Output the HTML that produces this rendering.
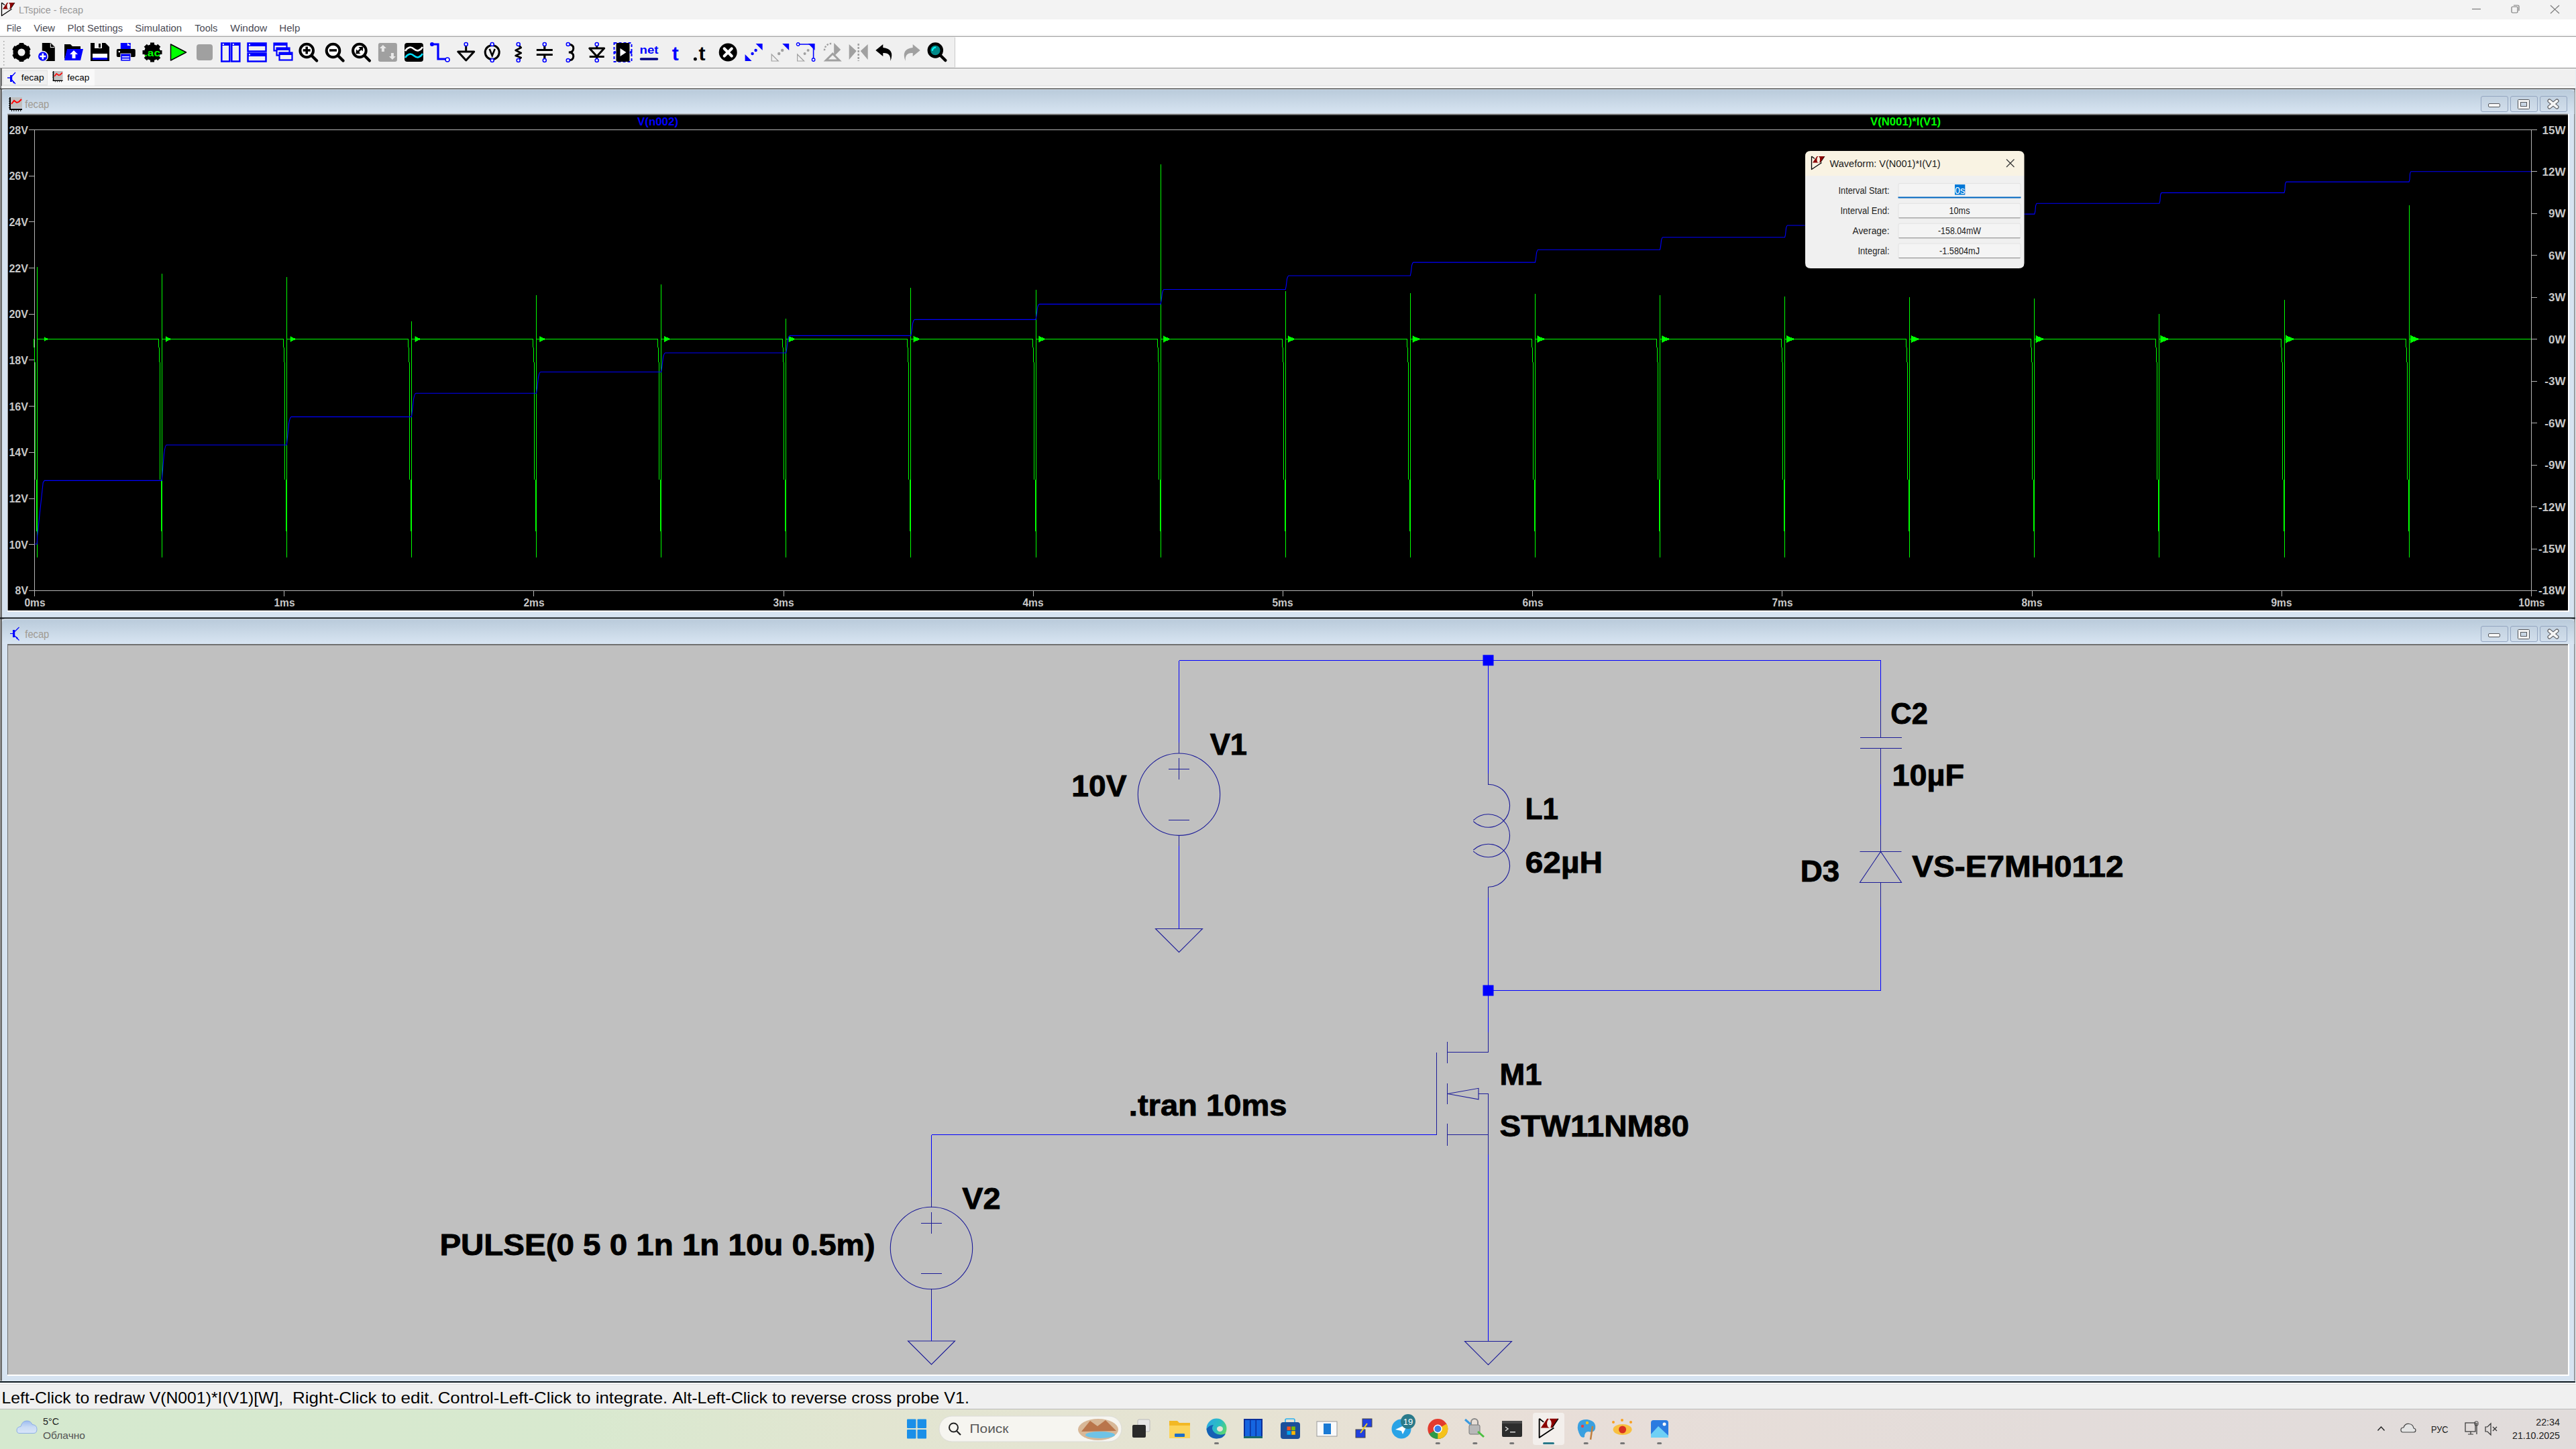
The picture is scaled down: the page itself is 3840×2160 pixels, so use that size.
<!DOCTYPE html><html><head><meta charset="utf-8"><style>
html,body{margin:0;padding:0;width:3840px;height:2160px;overflow:hidden;background:#f0f0f0}
svg{position:absolute;left:0;top:0;font-family:"Liberation Sans", sans-serif}
</style></head><body>
<svg width="3840" height="2160" viewBox="0 0 3840 2160">
<defs>
<linearGradient id="mdit" x1="0" y1="0" x2="0" y2="1"><stop offset="0" stop-color="#bacbdb"/><stop offset="1" stop-color="#d8e5f2"/></linearGradient>
<linearGradient id="tbar" x1="0" y1="0" x2="1" y2="0">
<stop offset="0" stop-color="#d5e9cf"/><stop offset="0.22" stop-color="#d8e9cf"/><stop offset="0.34" stop-color="#e2e5d1"/><stop offset="0.48" stop-color="#e6e3d3"/><stop offset="0.6" stop-color="#e8ded8"/><stop offset="0.8" stop-color="#e3dcda"/><stop offset="1" stop-color="#e1dcdb"/></linearGradient>
<linearGradient id="btng" x1="0" y1="0" x2="0" y2="1"><stop offset="0" stop-color="#c2d1e0"/><stop offset="1" stop-color="#d2dfec"/></linearGradient>
</defs>

<rect x="0" y="0" width="3840" height="29" fill="#f3f3f3"/>
<text x="28" y="20" font-size="15" font-weight="normal" fill="#999999" text-anchor="start" textLength="96" lengthAdjust="spacingAndGlyphs">LTspice - fecap</text>
<g stroke="#7a7a7a" stroke-width="1.2" fill="none"><line x1="3685" y1="13.5" x2="3698" y2="13.5"/><rect x="3744" y="10" width="9" height="9" rx="1.5"/><path d="M3747 8 h6.5 a1.5 1.5 0 0 1 1.5 1.5 v6.5"/><line x1="3802" y1="8" x2="3815" y2="20"/><line x1="3815" y1="8" x2="3802" y2="20"/></g>
<g transform="translate(0,0) scale(1)"><path d="M2.5 4 V23.5 L17.5 13.5 M2.5 4 L7 7.5" fill="none" stroke="#000" stroke-width="1.3" stroke-linejoin="round"/><path d="M4 13.5 L10.5 4 H22 L15.5 13.5 Z" fill="#8b0000"/><ellipse cx="12.7" cy="9" rx="2.3" ry="4.2" fill="#f3f3f3"/><rect x="12" y="3.5" width="1.2" height="2.5" fill="#f3f3f3"/><rect x="13" y="12" width="1.2" height="2" fill="#f3f3f3"/><path d="M22 4 L16 13" stroke="#000" stroke-width="0.9"/></g>
<rect x="0" y="29" width="3840" height="23" fill="#ffffff"/>
<rect x="0" y="52" width="3840" height="1" fill="#f0f0f0"/>
<rect x="0" y="54" width="3840" height="1" fill="#a0a0a0"/>
<text x="9.8" y="46.6" font-size="14.8" font-weight="normal" fill="#4b4b55" text-anchor="start" textLength="21.9" lengthAdjust="spacingAndGlyphs">File</text>
<text x="50.3" y="46.6" font-size="14.8" font-weight="normal" fill="#4b4b55" text-anchor="start" textLength="31.7" lengthAdjust="spacingAndGlyphs">View</text>
<text x="100.6" y="46.6" font-size="14.8" font-weight="normal" fill="#4b4b55" text-anchor="start" textLength="82.5" lengthAdjust="spacingAndGlyphs">Plot Settings</text>
<text x="201.2" y="46.6" font-size="14.8" font-weight="normal" fill="#4b4b55" text-anchor="start" textLength="70" lengthAdjust="spacingAndGlyphs">Simulation</text>
<text x="290.3" y="46.6" font-size="14.8" font-weight="normal" fill="#4b4b55" text-anchor="start" textLength="34" lengthAdjust="spacingAndGlyphs">Tools</text>
<text x="343.3" y="46.6" font-size="14.8" font-weight="normal" fill="#4b4b55" text-anchor="start" textLength="55" lengthAdjust="spacingAndGlyphs">Window</text>
<text x="416.3" y="46.6" font-size="14.8" font-weight="normal" fill="#4b4b55" text-anchor="start" textLength="31" lengthAdjust="spacingAndGlyphs">Help</text>
<rect x="0" y="55" width="3840" height="46" fill="#ffffff"/>
<rect x="0" y="55" width="1424" height="46" fill="#f0f0f0"/>
<rect x="1423" y="56" width="1" height="44" fill="#c8c8c8"/>
<rect x="0" y="101" width="3840" height="1" fill="#8c8c8c"/>
<rect x="5" y="61" width="1.5" height="1.5" fill="#a0a0a0"/>
<rect x="5" y="66" width="1.5" height="1.5" fill="#a0a0a0"/>
<rect x="5" y="71" width="1.5" height="1.5" fill="#a0a0a0"/>
<rect x="5" y="76" width="1.5" height="1.5" fill="#a0a0a0"/>
<rect x="5" y="81" width="1.5" height="1.5" fill="#a0a0a0"/>
<rect x="5" y="86" width="1.5" height="1.5" fill="#a0a0a0"/>
<rect x="5" y="91" width="1.5" height="1.5" fill="#a0a0a0"/>
<rect x="5" y="96" width="1.5" height="1.5" fill="#a0a0a0"/>
<rect x="0" y="102" width="3840" height="30" fill="#f0f0f0"/>
<rect x="0" y="102" width="2" height="30" fill="#707070"/>
<rect x="2" y="127" width="3836" height="1" fill="#e3e3e3"/>
<rect x="4.5" y="105.5" width="66" height="21" fill="#f0f0f0" stroke="#e4e4e4"/>
<rect x="71" y="103.5" width="70" height="24" fill="#f9f9f9"/>
<g transform="translate(11,108)"><path d="M12 0 L5.5 7 M0 8 H5 M5.5 10 L12 17" stroke="#0000ff" stroke-width="1.3" fill="none"/><rect x="4" y="4" width="3.2" height="10" fill="#0000ff"/><path d="M7 11 L11 15 L9 16.5 Z" fill="#0000ff"/></g>
<text x="31.8" y="120.3" font-size="13.5" font-weight="normal" fill="#000" text-anchor="start" textLength="33.8" lengthAdjust="spacingAndGlyphs">fecap</text>
<g transform="translate(78,106) scale(0.78)"><rect x="3" y="0" width="17" height="16" fill="#c0c0c0"/><rect x="1" y="0" width="2" height="19" fill="#000"/><rect x="1" y="17" width="19" height="2" fill="#000"/><rect x="0" y="3" width="2" height="1" fill="#000"/><rect x="0" y="7" width="2" height="1" fill="#000"/><rect x="0" y="11" width="2" height="1" fill="#000"/><rect x="5" y="19" width="1" height="2" fill="#000"/><rect x="9" y="19" width="1" height="2" fill="#000"/><rect x="13" y="19" width="1" height="2" fill="#000"/><rect x="17" y="19" width="1" height="2" fill="#000"/><path d="M4 10 L8 5 L12 8 L15 7 L19 3" stroke="#ff0000" stroke-width="2" fill="none"/></g>
<text x="100.2" y="119.6" font-size="13.5" font-weight="normal" fill="#000" text-anchor="start" textLength="33" lengthAdjust="spacingAndGlyphs">fecap</text>
<rect x="0" y="132" width="3840" height="1929" fill="#d6e3f1"/>
<rect x="0" y="102" width="3" height="1959" fill="#6b6b6b"/><rect x="0" y="102" width="1" height="1959" fill="#9a9a9a"/>
<rect x="3837.3" y="132" width="1.5" height="1929" fill="#7a7a7a"/>
<rect x="3838.8" y="102" width="1.2" height="1959" fill="#e8edf2"/>
<rect x="2" y="128" width="3836.8" height="4" fill="#f9f9f9"/>
<rect x="2" y="128.6" width="3836" height="0.6" fill="#e6e6e6"/>
<rect x="0" y="131.8" width="3838.8" height="1.3" fill="#333333"/>
<path d="M3 170 V138 Q3 133.1 8 133.1 H3832 Q3837.3 133.1 3837.3 138 V170 Z" fill="#dde8f2"/>
<path d="M3 170 V139 Q3 134.1 8 134.1 H3832 Q3837.3 134.1 3837.3 139 V170 Z" fill="url(#mdit)"/>
<rect x="3698.5" y="143.5" width="40" height="23" rx="2.5" fill="url(#btng)" stroke="#93a5c0"/><rect x="3742.5" y="143.5" width="40" height="23" rx="2.5" fill="url(#btng)" stroke="#93a5c0"/><rect x="3786.5" y="143.5" width="40" height="23" rx="2.5" fill="url(#btng)" stroke="#93a5c0"/><rect x="3709.5" y="154.5" width="17" height="5" rx="1.5" fill="#fafafa" stroke="#55575c" stroke-width="1"/><rect x="3753.5" y="148.5" width="17" height="14" rx="1" fill="#f4f4f4" stroke="#55575c" stroke-width="1"/><rect x="3757.5" y="152.5" width="9" height="6" fill="#c8d5e3" stroke="#55575c" stroke-width="1"/><path d="M3800.5 150.5 L3811.5 159.5 M3811.5 150.5 L3800.5 159.5" stroke="#55575c" stroke-width="6" stroke-linecap="round"/><path d="M3800.5 150.5 L3811.5 159.5 M3811.5 150.5 L3800.5 159.5" stroke="#f6f6f6" stroke-width="3.8" stroke-linecap="round"/>
<g transform="translate(13,145)"><rect x="3" y="0" width="17" height="16" fill="#c0c0c0"/><rect x="1" y="0" width="2" height="19" fill="#000"/><rect x="1" y="17" width="19" height="2" fill="#000"/><rect x="0" y="2.0" width="2" height="1" fill="#000"/><rect x="0" y="5.3" width="2" height="1" fill="#000"/><rect x="0" y="8.6" width="2" height="1" fill="#000"/><rect x="0" y="11.9" width="2" height="1" fill="#000"/><rect x="0" y="15.2" width="2" height="1" fill="#000"/><rect x="4.0" y="19" width="1" height="2" fill="#000"/><rect x="7.3" y="19" width="1" height="2" fill="#000"/><rect x="10.6" y="19" width="1" height="2" fill="#000"/><rect x="13.9" y="19" width="1" height="2" fill="#000"/><rect x="17.2" y="19" width="1" height="2" fill="#000"/><path d="M4 10 L8 5 L12 8 L15 7 L19 3" stroke="#ff0000" stroke-width="2" fill="none"/></g>
<text x="37.3" y="161" font-size="17" font-weight="normal" fill="#a09a92" text-anchor="start" textLength="36" lengthAdjust="spacingAndGlyphs">fecap</text>
<rect x="11" y="170" width="3819" height="742" fill="#ffffff"/>
<rect x="11" y="169.5" width="3817" height="740.5" fill="#a0a0a0"/>
<rect x="12" y="170.5" width="3816" height="1" fill="#5a5a5a"/>
<rect x="12" y="171.5" width="3816" height="738.5" fill="#000000"/>
<g stroke="#b4b4b4" stroke-width="1" fill="none" shape-rendering="crispEdges">
<path d="M43 193.5 H3782 M43 880.5 H3782 M51.5 193.5 V889 M3773.5 193.5 V889"/>
<path d="M43 193.5 H51"/>
<path d="M43 262.5 H51"/>
<path d="M43 330.5 H51"/>
<path d="M43 399.5 H51"/>
<path d="M43 468.5 H51"/>
<path d="M43 536.5 H51"/>
<path d="M43 605.5 H51"/>
<path d="M43 674.5 H51"/>
<path d="M43 743.5 H51"/>
<path d="M43 811.5 H51"/>
<path d="M43 880.5 H51"/>
<path d="M3774 193.5 H3782"/>
<path d="M3774 255.5 H3782"/>
<path d="M3774 318.5 H3782"/>
<path d="M3774 380.5 H3782"/>
<path d="M3774 443.5 H3782"/>
<path d="M3774 505.5 H3782"/>
<path d="M3774 568.5 H3782"/>
<path d="M3774 630.5 H3782"/>
<path d="M3774 693.5 H3782"/>
<path d="M3774 755.5 H3782"/>
<path d="M3774 818.5 H3782"/>
<path d="M3774 880.5 H3782"/>
<path d="M51.5 881 V889"/>
<path d="M423.5 881 V889"/>
<path d="M795.5 881 V889"/>
<path d="M1168.5 881 V889"/>
<path d="M1540.5 881 V889"/>
<path d="M1912.5 881 V889"/>
<path d="M2284.5 881 V889"/>
<path d="M2656.5 881 V889"/>
<path d="M3029.5 881 V889"/>
<path d="M3401.5 881 V889"/>
<path d="M3773.5 881 V889"/>
</g>
<text x="42" y="200" font-size="17" font-weight="bold" fill="#c8c8c8" text-anchor="end" textLength="28.6" lengthAdjust="spacingAndGlyphs">28V</text>
<text x="42" y="268" font-size="17" font-weight="bold" fill="#c8c8c8" text-anchor="end" textLength="28.6" lengthAdjust="spacingAndGlyphs">26V</text>
<text x="42" y="337" font-size="17" font-weight="bold" fill="#c8c8c8" text-anchor="end" textLength="28.6" lengthAdjust="spacingAndGlyphs">24V</text>
<text x="42" y="406" font-size="17" font-weight="bold" fill="#c8c8c8" text-anchor="end" textLength="28.6" lengthAdjust="spacingAndGlyphs">22V</text>
<text x="42" y="474" font-size="17" font-weight="bold" fill="#c8c8c8" text-anchor="end" textLength="28.6" lengthAdjust="spacingAndGlyphs">20V</text>
<text x="42" y="543" font-size="17" font-weight="bold" fill="#c8c8c8" text-anchor="end" textLength="28.6" lengthAdjust="spacingAndGlyphs">18V</text>
<text x="42" y="612" font-size="17" font-weight="bold" fill="#c8c8c8" text-anchor="end" textLength="28.6" lengthAdjust="spacingAndGlyphs">16V</text>
<text x="42" y="680" font-size="17" font-weight="bold" fill="#c8c8c8" text-anchor="end" textLength="28.6" lengthAdjust="spacingAndGlyphs">14V</text>
<text x="42" y="749" font-size="17" font-weight="bold" fill="#c8c8c8" text-anchor="end" textLength="28.6" lengthAdjust="spacingAndGlyphs">12V</text>
<text x="42" y="818" font-size="17" font-weight="bold" fill="#c8c8c8" text-anchor="end" textLength="28.6" lengthAdjust="spacingAndGlyphs">10V</text>
<text x="42" y="886" font-size="17" font-weight="bold" fill="#c8c8c8" text-anchor="end" textLength="19.4" lengthAdjust="spacingAndGlyphs">8V</text>
<text x="3824.5" y="200" font-size="17" font-weight="bold" fill="#c8c8c8" text-anchor="end">15W</text>
<text x="3824.5" y="262" font-size="17" font-weight="bold" fill="#c8c8c8" text-anchor="end">12W</text>
<text x="3824.5" y="324" font-size="17" font-weight="bold" fill="#c8c8c8" text-anchor="end">9W</text>
<text x="3824.5" y="387" font-size="17" font-weight="bold" fill="#c8c8c8" text-anchor="end">6W</text>
<text x="3824.5" y="449" font-size="17" font-weight="bold" fill="#c8c8c8" text-anchor="end">3W</text>
<text x="3824.5" y="512" font-size="17" font-weight="bold" fill="#c8c8c8" text-anchor="end">0W</text>
<text x="3824.5" y="574" font-size="17" font-weight="bold" fill="#c8c8c8" text-anchor="end">-3W</text>
<text x="3824.5" y="637" font-size="17" font-weight="bold" fill="#c8c8c8" text-anchor="end">-6W</text>
<text x="3824.5" y="699" font-size="17" font-weight="bold" fill="#c8c8c8" text-anchor="end">-9W</text>
<text x="3824.5" y="762" font-size="17" font-weight="bold" fill="#c8c8c8" text-anchor="end">-12W</text>
<text x="3824.5" y="824" font-size="17" font-weight="bold" fill="#c8c8c8" text-anchor="end">-15W</text>
<text x="3824.5" y="886" font-size="17" font-weight="bold" fill="#c8c8c8" text-anchor="end">-18W</text>
<text x="52" y="904" font-size="17" font-weight="bold" fill="#c8c8c8" text-anchor="middle" textLength="31" lengthAdjust="spacingAndGlyphs">0ms</text>
<text x="424" y="904" font-size="17" font-weight="bold" fill="#c8c8c8" text-anchor="middle" textLength="31" lengthAdjust="spacingAndGlyphs">1ms</text>
<text x="796" y="904" font-size="17" font-weight="bold" fill="#c8c8c8" text-anchor="middle" textLength="31" lengthAdjust="spacingAndGlyphs">2ms</text>
<text x="1168" y="904" font-size="17" font-weight="bold" fill="#c8c8c8" text-anchor="middle" textLength="31" lengthAdjust="spacingAndGlyphs">3ms</text>
<text x="1540" y="904" font-size="17" font-weight="bold" fill="#c8c8c8" text-anchor="middle" textLength="31" lengthAdjust="spacingAndGlyphs">4ms</text>
<text x="1912" y="904" font-size="17" font-weight="bold" fill="#c8c8c8" text-anchor="middle" textLength="31" lengthAdjust="spacingAndGlyphs">5ms</text>
<text x="2285" y="904" font-size="17" font-weight="bold" fill="#c8c8c8" text-anchor="middle" textLength="31" lengthAdjust="spacingAndGlyphs">6ms</text>
<text x="2657" y="904" font-size="17" font-weight="bold" fill="#c8c8c8" text-anchor="middle" textLength="31" lengthAdjust="spacingAndGlyphs">7ms</text>
<text x="3029" y="904" font-size="17" font-weight="bold" fill="#c8c8c8" text-anchor="middle" textLength="31" lengthAdjust="spacingAndGlyphs">8ms</text>
<text x="3401" y="904" font-size="17" font-weight="bold" fill="#c8c8c8" text-anchor="middle" textLength="31" lengthAdjust="spacingAndGlyphs">9ms</text>
<text x="3774" y="904" font-size="17" font-weight="bold" fill="#c8c8c8" text-anchor="middle" textLength="39.3" lengthAdjust="spacingAndGlyphs">10ms</text>
<text x="950" y="187" font-size="16" font-weight="bold" fill="#0000ff" text-anchor="start" textLength="61" lengthAdjust="spacingAndGlyphs">V(n002)</text>
<text x="2788" y="187" font-size="16" font-weight="bold" fill="#00ff00" text-anchor="start" textLength="105" lengthAdjust="spacingAndGlyphs">V(N001)*I(V1)</text>
<path d="M52 505.5 H50.5 M55.5 505.5 H236.5 M241.5 505.5 H422.5 M427.5 505.5 H608.5 M613.5 505.5 H794.5 M799.5 505.5 H980.5 M985.5 505.5 H1166.5 M1171.5 505.5 H1352.5 M1357.5 505.5 H1539.5 M1544.5 505.5 H1725.5 M1730.5 505.5 H1911.5 M1916.5 505.5 H2097.5 M2102.5 505.5 H2283.5 M2288.5 505.5 H2469.5 M2474.5 505.5 H2655.5 M2660.5 505.5 H2841.5 M2846.5 505.5 H3027.5 M3032.5 505.5 H3213.5 M3218.5 505.5 H3400.5 M3405.5 505.5 H3586.5 M3591.5 505.5 H3773" stroke="#00ff00" stroke-width="1" fill="none" shape-rendering="crispEdges"/>
<g stroke="#00ff00" fill="none" shape-rendering="crispEdges">
<path d="M55.5 398 V831" stroke-width="1"/>
<path d="M50.5 505 V518 M51.5 518 V540 M52.5 540 V715 M54.5 715 V792" stroke-width="1"/>
<path d="M66.5 503.0 L74.5 505.5 L66.5 508.0 Z" fill="#00ff00" stroke="none"/>
<path d="M66.5 502.5 V508.5" stroke-width="1.2" shape-rendering="auto"/>
<path d="M241.5 408 V831" stroke-width="1"/>
<path d="M236.5 505 V518 M237.5 518 V540 M238.5 540 V715 M240.5 715 V792" stroke-width="1"/>
<path d="M247.5 502.0 L256.5 505.5 L247.5 509.0 Z" fill="#00ff00" stroke="none"/>
<path d="M247.5 501.5 V509.5" stroke-width="1.2" shape-rendering="auto"/>
<path d="M427.5 413 V831" stroke-width="1"/>
<path d="M422.5 505 V518 M423.5 518 V540 M424.5 540 V715 M426.5 715 V792" stroke-width="1"/>
<path d="M433.3 501.9 L442.6 505.5 L433.3 509.1 Z" fill="#00ff00" stroke="none"/>
<path d="M433.3 501.4 V509.6" stroke-width="1.2" shape-rendering="auto"/>
<path d="M613.5 479 V831" stroke-width="1"/>
<path d="M608.5 505 V518 M609.5 518 V540 M610.5 540 V715 M612.5 715 V792" stroke-width="1"/>
<path d="M619.1 501.8 L628.6 505.5 L619.1 509.2 Z" fill="#00ff00" stroke="none"/>
<path d="M619.1 501.3 V509.7" stroke-width="1.2" shape-rendering="auto"/>
<path d="M799.5 440 V831" stroke-width="1"/>
<path d="M794.5 505 V518 M795.5 518 V540 M796.5 540 V715 M798.5 715 V792" stroke-width="1"/>
<path d="M804.8 501.7 L814.7 505.5 L804.8 509.3 Z" fill="#00ff00" stroke="none"/>
<path d="M804.8 501.2 V509.8" stroke-width="1.2" shape-rendering="auto"/>
<path d="M985.5 424 V831" stroke-width="1"/>
<path d="M980.5 505 V518 M981.5 518 V540 M982.5 540 V715 M984.5 715 V792" stroke-width="1"/>
<path d="M990.6 501.6 L1000.7 505.5 L990.6 509.4 Z" fill="#00ff00" stroke="none"/>
<path d="M990.6 501.1 V509.9" stroke-width="1.2" shape-rendering="auto"/>
<path d="M1171.5 475 V831" stroke-width="1"/>
<path d="M1166.5 505 V518 M1167.5 518 V540 M1168.5 540 V715 M1170.5 715 V792" stroke-width="1"/>
<path d="M1176.4 501.4 L1186.8 505.5 L1176.4 509.6 Z" fill="#00ff00" stroke="none"/>
<path d="M1176.4 500.9 V510.1" stroke-width="1.2" shape-rendering="auto"/>
<path d="M1357.5 429 V831" stroke-width="1"/>
<path d="M1352.5 505 V518 M1353.5 518 V540 M1354.5 540 V715 M1356.5 715 V792" stroke-width="1"/>
<path d="M1362.2 501.3 L1372.8 505.5 L1362.2 509.7 Z" fill="#00ff00" stroke="none"/>
<path d="M1362.2 500.8 V510.2" stroke-width="1.2" shape-rendering="auto"/>
<path d="M1544.5 432 V831" stroke-width="1"/>
<path d="M1539.5 505 V518 M1540.5 518 V540 M1541.5 540 V715 M1543.5 715 V792" stroke-width="1"/>
<path d="M1548.9 501.2 L1559.9 505.5 L1548.9 509.8 Z" fill="#00ff00" stroke="none"/>
<path d="M1548.9 500.7 V510.3" stroke-width="1.2" shape-rendering="auto"/>
<path d="M1730.5 245 V831" stroke-width="1"/>
<path d="M1725.5 505 V518 M1726.5 518 V540 M1727.5 540 V715 M1729.5 715 V792" stroke-width="1"/>
<path d="M1734.7 501.1 L1745.9 505.5 L1734.7 509.9 Z" fill="#00ff00" stroke="none"/>
<path d="M1734.7 500.6 V510.4" stroke-width="1.2" shape-rendering="auto"/>
<path d="M1916.5 434 V831" stroke-width="1"/>
<path d="M1911.5 505 V518 M1912.5 518 V540 M1913.5 540 V715 M1915.5 715 V792" stroke-width="1"/>
<path d="M1920.5 501.0 L1932.0 505.5 L1920.5 510.0 Z" fill="#00ff00" stroke="none"/>
<path d="M1920.5 500.5 V510.5" stroke-width="1.2" shape-rendering="auto"/>
<path d="M2102.5 437 V831" stroke-width="1"/>
<path d="M2097.5 505 V518 M2098.5 518 V540 M2099.5 540 V715 M2101.5 715 V792" stroke-width="1"/>
<path d="M2106.3 500.9 L2118.1 505.5 L2106.3 510.1 Z" fill="#00ff00" stroke="none"/>
<path d="M2106.3 500.4 V510.6" stroke-width="1.2" shape-rendering="auto"/>
<path d="M2288.5 438 V831" stroke-width="1"/>
<path d="M2283.5 505 V518 M2284.5 518 V540 M2285.5 540 V715 M2287.5 715 V792" stroke-width="1"/>
<path d="M2292.1 500.8 L2304.1 505.5 L2292.1 510.2 Z" fill="#00ff00" stroke="none"/>
<path d="M2292.1 500.3 V510.7" stroke-width="1.2" shape-rendering="auto"/>
<path d="M2474.5 440 V831" stroke-width="1"/>
<path d="M2469.5 505 V518 M2470.5 518 V540 M2471.5 540 V715 M2473.5 715 V792" stroke-width="1"/>
<path d="M2477.8 500.7 L2490.2 505.5 L2477.8 510.3 Z" fill="#00ff00" stroke="none"/>
<path d="M2477.8 500.2 V510.8" stroke-width="1.2" shape-rendering="auto"/>
<path d="M2660.5 442 V831" stroke-width="1"/>
<path d="M2655.5 505 V518 M2656.5 518 V540 M2657.5 540 V715 M2659.5 715 V792" stroke-width="1"/>
<path d="M2663.6 500.6 L2676.2 505.5 L2663.6 510.4 Z" fill="#00ff00" stroke="none"/>
<path d="M2663.6 500.1 V510.9" stroke-width="1.2" shape-rendering="auto"/>
<path d="M2846.5 443 V831" stroke-width="1"/>
<path d="M2841.5 505 V518 M2842.5 518 V540 M2843.5 540 V715 M2845.5 715 V792" stroke-width="1"/>
<path d="M2849.4 500.4 L2862.3 505.5 L2849.4 510.6 Z" fill="#00ff00" stroke="none"/>
<path d="M2849.4 499.9 V511.1" stroke-width="1.2" shape-rendering="auto"/>
<path d="M3032.5 445 V831" stroke-width="1"/>
<path d="M3027.5 505 V518 M3028.5 518 V540 M3029.5 540 V715 M3031.5 715 V792" stroke-width="1"/>
<path d="M3035.2 500.3 L3048.3 505.5 L3035.2 510.7 Z" fill="#00ff00" stroke="none"/>
<path d="M3035.2 499.8 V511.2" stroke-width="1.2" shape-rendering="auto"/>
<path d="M3218.5 468 V831" stroke-width="1"/>
<path d="M3213.5 505 V518 M3214.5 518 V540 M3215.5 540 V715 M3217.5 715 V792" stroke-width="1"/>
<path d="M3220.9 500.2 L3234.4 505.5 L3220.9 510.8 Z" fill="#00ff00" stroke="none"/>
<path d="M3220.9 499.7 V511.3" stroke-width="1.2" shape-rendering="auto"/>
<path d="M3405.5 447 V831" stroke-width="1"/>
<path d="M3400.5 505 V518 M3401.5 518 V540 M3402.5 540 V715 M3404.5 715 V792" stroke-width="1"/>
<path d="M3407.7 500.1 L3421.4 505.5 L3407.7 510.9 Z" fill="#00ff00" stroke="none"/>
<path d="M3407.7 499.6 V511.4" stroke-width="1.2" shape-rendering="auto"/>
<path d="M3591.5 306 V831" stroke-width="1"/>
<path d="M3586.5 505 V518 M3587.5 518 V540 M3588.5 540 V715 M3590.5 715 V792" stroke-width="1"/>
<path d="M3593.5 500.0 L3607.5 505.5 L3593.5 511.0 Z" fill="#00ff00" stroke="none"/>
<path d="M3593.5 499.5 V511.5" stroke-width="1.2" shape-rendering="auto"/>
</g>
<path d="M51.5 811 H55.2 L55.7 798.7 L64.2 719.4 L66.2 716.4 H241.3 L242.3 703.1 L244.5 676.6 Q246.2 663.3 248.3 663.3 H427.4 L428.4 652.8 L430.5 631.9 Q432.2 621.4 434.2 621.4 H613.5 L614.5 612.6 L616.5 595.0 Q618.1 586.2 620.1 586.2 H799.6 L800.6 578.3 L802.5 562.4 Q804.1 554.5 806.0 554.5 H985.7 L986.7 547.4 L988.5 533.1 Q990.0 526.0 991.8 526.0 H1171.8 L1172.8 519.6 L1174.5 506.8 Q1175.9 500.4 1177.7 500.4 H1357.9 L1358.9 494.4 L1360.5 482.4 Q1361.9 476.4 1363.6 476.4 H1544.0 L1545.0 470.6 L1546.5 459.1 Q1547.8 453.4 1549.5 453.4 H1730.1 L1731.1 447.9 L1732.5 437.0 Q1733.8 431.5 1735.3 431.5 H1916.2 L1917.2 426.4 L1918.5 416.1 Q1919.7 411.0 1921.2 411.0 H2102.3 L2103.3 406.0 L2104.5 396.1 Q2105.7 391.1 2107.1 391.1 H2288.4 L2289.4 386.4 L2290.5 376.9 Q2291.6 372.2 2293.0 372.2 H2474.5 L2475.5 367.6 L2476.5 358.4 Q2477.6 353.8 2478.9 353.8 H2660.6 L2661.6 349.4 L2662.5 340.4 Q2663.5 336.0 2664.7 336.0 H2846.7 L2847.7 331.8 L2848.5 323.3 Q2849.4 319.1 2850.6 319.1 H3032.8 L3033.8 315.2 L3034.5 307.2 Q3035.4 303.3 3036.5 303.3 H3218.9 L3219.9 299.3 L3220.5 291.4 Q3221.3 287.4 3222.4 287.4 H3405.0 L3406.0 283.3 L3406.5 275.2 Q3407.3 271.1 3408.2 271.1 H3591.1 L3592.1 267.3 L3592.5 259.6 Q3593.2 255.8 3594.1 255.8 H3773" stroke="#0000ff" stroke-width="1.1" fill="none"/>
<g>
<rect x="2689" y="223" width="331" height="180" rx="10" fill="#000" opacity="0.25"/>
<path d="M2691 262 V233 Q2691 225 2699 225 H3009.5 Q3017.5 225 3017.5 233 V262 Z" fill="#f9f3e3"/>
<path d="M2691 262 H3017.5 V392 Q3017.5 400 3009.5 400 H2699 Q2691 400 2691 392 Z" fill="#f0f0f0"/>
<g transform="translate(2698,229) scale(1.0)"><path d="M2.5 4 V23.5 L17.5 13.5 M2.5 4 L7 7.5" fill="none" stroke="#000" stroke-width="1.3" stroke-linejoin="round"/><path d="M4 13.5 L10.5 4 H22 L15.5 13.5 Z" fill="#8b0000"/><ellipse cx="12.7" cy="9" rx="2.3" ry="4.2" fill="#f9f3e3"/><rect x="12" y="3.5" width="1.2" height="2.5" fill="#f9f3e3"/><rect x="13" y="12" width="1.2" height="2" fill="#f9f3e3"/><path d="M22 4 L16 13" stroke="#000" stroke-width="0.9"/></g>
<text x="2727.6" y="249" font-size="15.5" font-weight="normal" fill="#1a1a1a" text-anchor="start" textLength="165" lengthAdjust="spacingAndGlyphs">Waveform: V(N001)*I(V1)</text>
<path d="M2991 237.5 L3002.5 249 M3002.5 237.5 L2991 249" stroke="#333" stroke-width="1.2"/>
<text x="2816.5" y="289" font-size="14" font-weight="normal" fill="#1e1e1e" text-anchor="end" textLength="76" lengthAdjust="spacingAndGlyphs">Interval Start:</text>
<rect x="2830" y="273.4" width="182" height="22" rx="2" fill="#f4f4f4" stroke="#e2e2e2" stroke-width="1"/>
<rect x="2829.5" y="293.4" width="183" height="2" fill="#0067c0"/>
<rect x="2914" y="275" width="15.3" height="15.4" fill="#0078d7"/>
<text x="2921.5" y="289" font-size="14" font-weight="normal" fill="#ffffff" text-anchor="middle" textLength="15" lengthAdjust="spacingAndGlyphs">0s</text>
<text x="2816.5" y="319" font-size="14" font-weight="normal" fill="#1e1e1e" text-anchor="end" textLength="73" lengthAdjust="spacingAndGlyphs">Interval End:</text>
<rect x="2830" y="303.3" width="182" height="22" rx="2" fill="#f4f4f4" stroke="#e2e2e2" stroke-width="1"/>
<rect x="2830.5" y="324.3" width="181" height="1" fill="#8a8a8a"/>
<text x="2921" y="319" font-size="14" font-weight="normal" fill="#1a1a1a" text-anchor="middle" textLength="31" lengthAdjust="spacingAndGlyphs">10ms</text>
<text x="2816.5" y="349" font-size="14" font-weight="normal" fill="#1e1e1e" text-anchor="end" textLength="55" lengthAdjust="spacingAndGlyphs">Average:</text>
<rect x="2830" y="333.2" width="182" height="22" rx="2" fill="#f4f4f4" stroke="#e2e2e2" stroke-width="1"/>
<rect x="2830.5" y="354.2" width="181" height="1" fill="#8a8a8a"/>
<text x="2921" y="349" font-size="14" font-weight="normal" fill="#1a1a1a" text-anchor="middle" textLength="64" lengthAdjust="spacingAndGlyphs">-158.04mW</text>
<text x="2816.5" y="379" font-size="14" font-weight="normal" fill="#1e1e1e" text-anchor="end" textLength="47" lengthAdjust="spacingAndGlyphs">Integral:</text>
<rect x="2830" y="363.0" width="182" height="22" rx="2" fill="#f4f4f4" stroke="#e2e2e2" stroke-width="1"/>
<rect x="2830.5" y="384.0" width="181" height="1" fill="#8a8a8a"/>
<text x="2921" y="379" font-size="14" font-weight="normal" fill="#1a1a1a" text-anchor="middle" textLength="60" lengthAdjust="spacingAndGlyphs">-1.5804mJ</text>
</g>
<rect x="3" y="912" width="3834" height="8" fill="#d6e3f1"/>
<rect x="0" y="920.4" width="3838.8" height="2.2" fill="#141a1e"/>
<path d="M3 960 V928 Q3 922.6 8 922.6 H3832 Q3837.3 922.6 3837.3 928 V960 Z" fill="#dde8f2"/>
<path d="M3 960 V929 Q3 923.8 8 923.8 H3832 Q3837.3 923.8 3837.3 929 V960 Z" fill="url(#mdit)"/>
<rect x="3698.5" y="933.5" width="40" height="23" rx="2.5" fill="url(#btng)" stroke="#93a5c0"/><rect x="3742.5" y="933.5" width="40" height="23" rx="2.5" fill="url(#btng)" stroke="#93a5c0"/><rect x="3786.5" y="933.5" width="40" height="23" rx="2.5" fill="url(#btng)" stroke="#93a5c0"/><rect x="3709.5" y="944.5" width="17" height="5" rx="1.5" fill="#fafafa" stroke="#55575c" stroke-width="1"/><rect x="3753.5" y="938.5" width="17" height="14" rx="1" fill="#f4f4f4" stroke="#55575c" stroke-width="1"/><rect x="3757.5" y="942.5" width="9" height="6" fill="#c8d5e3" stroke="#55575c" stroke-width="1"/><path d="M3800.5 940.5 L3811.5 949.5 M3811.5 940.5 L3800.5 949.5" stroke="#55575c" stroke-width="6" stroke-linecap="round"/><path d="M3800.5 940.5 L3811.5 949.5 M3811.5 940.5 L3800.5 949.5" stroke="#f6f6f6" stroke-width="3.8" stroke-linecap="round"/>
<g transform="translate(15,935)"><path d="M13.5 0 L7 6.5 M0 9.5 H4.5 M7 13 L13.5 19.5" stroke="#0000ff" stroke-width="1.1" fill="none"/><rect x="4" y="4" width="3.2" height="11" fill="#0000ff"/><path d="M8.5 13.5 L12 16 L10 18 Z" fill="#0000ff"/></g>
<text x="37.3" y="950.7" font-size="17" font-weight="normal" fill="#a09a92" text-anchor="start" textLength="36" lengthAdjust="spacingAndGlyphs">fecap</text>
<rect x="11" y="960" width="3819" height="91" fill="#ffffff"/>
<rect x="11" y="960" width="3819" height="1091" fill="#ffffff"/>
<rect x="11" y="960" width="3817" height="1089" fill="#707070"/>
<rect x="12" y="962" width="3816" height="1087" fill="#c0c0c0"/>
<g fill="none" stroke-width="1" shape-rendering="crispEdges">
<line x1="1757.5" y1="984.5" x2="2803.5" y2="984.5" stroke="#0000ff"/>
<line x1="1757.5" y1="984.5" x2="1757.5" y2="1123" stroke="#0000ff"/>
<line x1="1757.5" y1="1245" x2="1757.5" y2="1384.5" stroke="#0000ff"/>
<line x1="2218.5" y1="984.5" x2="2218.5" y2="1169.5" stroke="#0000ff"/>
<line x1="2218.5" y1="1322" x2="2218.5" y2="1476.5" stroke="#0000ff"/>
<line x1="2803.5" y1="984.5" x2="2803.5" y2="1099.5" stroke="#0000ff"/>
<line x1="2803.5" y1="1115.5" x2="2803.5" y2="1269.5" stroke="#0000ff"/>
<line x1="2803.5" y1="1315" x2="2803.5" y2="1476.5" stroke="#0000ff"/>
<line x1="2218.5" y1="1476.5" x2="2803.5" y2="1476.5" stroke="#0000ff"/>
<line x1="2218.5" y1="1476.5" x2="2218.5" y2="1568.5" stroke="#0000ff"/>
<line x1="2218.5" y1="1691.5" x2="2218.5" y2="1999.5" stroke="#0000ff"/>
<line x1="1388.5" y1="1691.5" x2="2141.5" y2="1691.5" stroke="#0000ff"/>
<line x1="1388.5" y1="1691.5" x2="1388.5" y2="1800" stroke="#0000ff"/>
<line x1="1388.5" y1="1921" x2="1388.5" y2="1999" stroke="#0000ff"/>
</g>
<g fill="none" stroke="#1c1c98" stroke-width="1.1">
<path d="M1757.5 1107 V1123 M1757.5 1245 V1261 M1388.5 1784 V1800 M1388.5 1921 V1937 M2803.5 1044.5 V1099.5 M2803.5 1115.5 V1168.5 M2803.5 1230 V1269.5 M2803.5 1315 V1352 M2218.5 1538.5 V1568.5 M2218.5 1691.5 V1721 M2218.5 1153 V1169.5 M2218.5 1322 V1338" shape-rendering="crispEdges"/>
<circle cx="1757.5" cy="1184.2" r="61.2"/>
<path d="M1742 1146.5 H1773 M1757.5 1130 V1162 M1742 1222.5 H1773" shape-rendering="crispEdges"/>
<circle cx="1388.5" cy="1860.5" r="61.2"/>
<path d="M1373 1823.5 H1404 M1388.5 1807 V1839 M1373 1898.5 H1404" shape-rendering="crispEdges"/>
<path d="M1722.5 1384.5 H1792.5 L1757.5 1419.5 Z"/>
<path d="M2183.5 1999.5 H2253.5 L2218.5 2034.5 Z"/>
<path d="M1353.5 1999 H1423.5 L1388.5 2034 Z"/>
<path d="M2772.5 1099.5 H2834.5 M2772.5 1115.5 H2834.5" shape-rendering="crispEdges"/>
<path d="M2772.5 1269.5 H2834.5 M2803.5 1269.5 L2834.5 1315.5 H2772.5 Z"/>
<path d="M2218.5 1169.3 A32 32 0 1 1 2196.3 1224.3 M2196.3 1222.8 A32 32 0 1 1 2196.3 1268.8 M2196.3 1267.2 A32 32 0 1 1 2218.5 1322.2"/>
<path d="M2157.5 1553 V1585 M2141.5 1568.5 V1691.5 M2157.5 1615 V1646 M2157.5 1675 V1708 M2157.5 1568.5 H2218.5 M2157.5 1691.5 H2218.5 M2204 1630.5 H2218.5 V1691.5" shape-rendering="crispEdges"/>
<path d="M2158 1630.5 L2204 1622.3 V1638.9 Z"/>
</g>
<rect x="2210.5" y="976.3" width="16" height="16" fill="#0000ff"/>
<rect x="2210.5" y="1468.5" width="16" height="16" fill="#0000ff"/>
<text x="1803.7" y="1125.3" font-size="45.0" font-weight="bold" fill="#000000" text-anchor="start" textLength="55.3" lengthAdjust="spacingAndGlyphs" stroke="#000" stroke-width="0.9">V1</text>
<text x="1597.3" y="1186.8" font-size="45.0" font-weight="bold" fill="#000000" text-anchor="start" textLength="82.2" lengthAdjust="spacingAndGlyphs" stroke="#000" stroke-width="0.9">10V</text>
<text x="2273.8" y="1221" font-size="45.0" font-weight="bold" fill="#000000" text-anchor="start" textLength="49.2" lengthAdjust="spacingAndGlyphs" stroke="#000" stroke-width="0.9">L1</text>
<text x="2273.8" y="1300.8" font-size="45.0" font-weight="bold" fill="#000000" text-anchor="start" textLength="115.2" lengthAdjust="spacingAndGlyphs" stroke="#000" stroke-width="0.9">62µH</text>
<text x="2818.3" y="1078.8" font-size="45.0" font-weight="bold" fill="#000000" text-anchor="start" textLength="55.5" lengthAdjust="spacingAndGlyphs" stroke="#000" stroke-width="0.9">C2</text>
<text x="2820.4" y="1170.6" font-size="45.0" font-weight="bold" fill="#000000" text-anchor="start" textLength="107.6" lengthAdjust="spacingAndGlyphs" stroke="#000" stroke-width="0.9">10µF</text>
<text x="2683.8" y="1313.6" font-size="45.0" font-weight="bold" fill="#000000" text-anchor="start" textLength="58.5" lengthAdjust="spacingAndGlyphs" stroke="#000" stroke-width="0.9">D3</text>
<text x="2850.3" y="1307.2" font-size="45.0" font-weight="bold" fill="#000000" text-anchor="start" textLength="315.2" lengthAdjust="spacingAndGlyphs" stroke="#000" stroke-width="0.9">VS-E7MH0112</text>
<text x="2235.5" y="1616.5" font-size="45.0" font-weight="bold" fill="#000000" text-anchor="start" textLength="62.9" lengthAdjust="spacingAndGlyphs" stroke="#000" stroke-width="0.9">M1</text>
<text x="2235.5" y="1694" font-size="45.0" font-weight="bold" fill="#000000" text-anchor="start" textLength="282.4" lengthAdjust="spacingAndGlyphs" stroke="#000" stroke-width="0.9">STW11NM80</text>
<text x="1434.3" y="1802.4" font-size="45.0" font-weight="bold" fill="#000000" text-anchor="start" textLength="57.3" lengthAdjust="spacingAndGlyphs" stroke="#000" stroke-width="0.9">V2</text>
<text x="655.4" y="1870.6" font-size="45.0" font-weight="bold" fill="#000000" text-anchor="start" textLength="649.2" lengthAdjust="spacingAndGlyphs" stroke="#000" stroke-width="0.9">PULSE(0 5 0 1n 1n 10u 0.5m)</text>
<text x="1682.8" y="1663" font-size="45.0" font-weight="bold" fill="#000000" text-anchor="start" textLength="235.7" lengthAdjust="spacingAndGlyphs" stroke="#000" stroke-width="0.9">.tran 10ms</text>
<rect x="0" y="2061" width="3840" height="39" fill="#f0f0f0"/>
<rect x="0" y="2058.4" width="3838.8" height="0.6" fill="#e8f0f6"/>
<rect x="0" y="2059" width="3838.8" height="2.1" fill="#0c1820"/>
<rect x="0" y="2061.1" width="3840" height="2.1" fill="#fcfcfc"/>
<rect x="0" y="2063.2" width="3840" height="0.8" fill="#d8d8d8"/>
<rect x="0" y="2100" width="3840" height="1" fill="#b9b9b9"/>
<text x="2.5" y="2092" font-size="23.2" font-weight="normal" fill="#000" text-anchor="start" textLength="419.7" lengthAdjust="spacingAndGlyphs">Left-Click to redraw V(N001)*I(V1)[W],</text>
<text x="436.09999999999997" y="2092" font-size="23.2" font-weight="normal" fill="#000" text-anchor="start" textLength="210.5" lengthAdjust="spacingAndGlyphs">Right-Click to edit.</text>
<text x="652.6999999999999" y="2092" font-size="23.2" font-weight="normal" fill="#000" text-anchor="start" textLength="342.6" lengthAdjust="spacingAndGlyphs">Control-Left-Click to integrate.</text>
<text x="1001.9" y="2092" font-size="23.2" font-weight="normal" fill="#000" text-anchor="start" textLength="443.0" lengthAdjust="spacingAndGlyphs">Alt-Left-Click to reverse cross probe V1.</text>
<rect x="0" y="2101" width="3840" height="59" fill="url(#tbar)"/>
<defs><linearGradient id="cld" x1="0" y1="0" x2="0" y2="1"><stop offset="0" stop-color="#9dbcf0"/><stop offset="0.5" stop-color="#c9dbf5"/><stop offset="1" stop-color="#d9e6f8"/></linearGradient></defs>
<path d="M29 2136.5 Q25 2136.5 25 2132 Q25 2127 31 2126.5 Q33 2118 40 2118 Q46 2118 48 2123.5 Q55 2124 55 2130.5 Q55 2136.5 50 2136.5 Z" fill="url(#cld)" stroke="#86a8e6" stroke-width="0.9"/>
<text x="64" y="2124" font-size="14.5" font-weight="normal" fill="#222" text-anchor="start" textLength="24" lengthAdjust="spacingAndGlyphs">5°C</text>
<text x="64" y="2145" font-size="14.5" font-weight="normal" fill="#555" text-anchor="start" textLength="63" lengthAdjust="spacingAndGlyphs">Облачно</text>
<g>
<rect x="1352" y="2115.5" width="13.5" height="13.5" rx="1" fill="#1a8fe8"/>
<rect x="1367.5" y="2115.5" width="13.5" height="13.5" rx="1" fill="#1a8fe8"/>
<rect x="1352" y="2131.0" width="13.5" height="13.5" rx="1" fill="#1a8fe8"/>
<rect x="1367.5" y="2131.0" width="13.5" height="13.5" rx="1" fill="#1a8fe8"/>
</g>
<rect x="1400" y="2111" width="272" height="38" rx="19" fill="#f6f5f0" stroke="#dcdcd8"/>
<circle cx="1421.5" cy="2128" r="6.5" fill="none" stroke="#222" stroke-width="2"/><path d="M1426 2133 L1432 2139" stroke="#222" stroke-width="2.2"/>
<text x="1445.5" y="2136" font-size="18" font-weight="normal" fill="#5a5a5a" text-anchor="start" textLength="58" lengthAdjust="spacingAndGlyphs">Поиск</text>
<ellipse cx="1637" cy="2131" rx="30" ry="16" fill="#d8b898"/><path d="M1612 2134 L1625 2118 L1636 2126 L1648 2117 L1664 2133 Z" fill="#b9754b"/><ellipse cx="1640" cy="2139" rx="22" ry="5" fill="#6ec3e6"/>
<rect x="1696" y="2116" width="18" height="18" rx="2" fill="#e6e6e6" stroke="#bbb"/><rect x="1688" y="2124" width="20" height="19" rx="2" fill="#2a2a2a"/>
<path d="M1743 2118 h12 l3 3 h16 v20 h-31 z" fill="#f2b825"/><rect x="1743" y="2125" width="31" height="19" fill="#fcd45a"/><rect x="1751" y="2137" width="15" height="5" rx="1" fill="#1e6ec8"/>
<defs><linearGradient id="edg" x1="0" y1="0" x2="1" y2="0.6"><stop offset="0" stop-color="#2aa6e8"/><stop offset="0.6" stop-color="#2bbfc0"/><stop offset="1" stop-color="#5fd86a"/></linearGradient></defs>
<circle cx="1813.5" cy="2129.5" r="15" fill="url(#edg)"/><path d="M1798.5 2130 Q1800 2144 1813.5 2144.5 Q1824 2144.5 1827 2137 Q1818 2141 1811 2136 Q1804 2130 1809 2124 Q1803 2124 1798.5 2130 Z" fill="#1560b4"/><ellipse cx="1818.5" cy="2130" rx="4.5" ry="4" fill="#e6e2d6"/>
<rect x="1854" y="2115" width="28" height="28" fill="#0b2f9a"/><rect x="1856" y="2117" width="7" height="24" fill="#1565e0"/><rect x="1864.5" y="2117" width="7" height="24" fill="#1565e0"/><rect x="1873" y="2117" width="7" height="24" fill="#1565e0"/><rect x="1854" y="2141" width="28" height="3" fill="#1a6a6a"/>
<path d="M1916 2121 V2117 Q1916 2115 1918 2115 H1928 Q1930 2115 1930 2117 V2121" fill="none" stroke="#2ab0f0" stroke-width="1.6"/><rect x="1909" y="2120" width="29" height="25" rx="4" fill="#1b4f9a"/><rect x="1918.5" y="2126.5" width="5.6" height="5.6" fill="#f25022"/><rect x="1925.2" y="2126.5" width="5.6" height="5.6" fill="#7fba00"/><rect x="1918.5" y="2133.2" width="5.6" height="5.6" fill="#00a4ef"/><rect x="1925.2" y="2133.2" width="5.6" height="5.6" fill="#ffb900"/>
<rect x="1963" y="2119" width="30" height="22" fill="#fafafa" stroke="#999"/><rect x="1973" y="2122" width="11" height="16" fill="#1a7ad4"/>
<rect x="2031" y="2115" width="14" height="12" fill="#2040e0" stroke="#444"/><rect x="2021" y="2131" width="14" height="12" fill="#2040e0" stroke="#444"/><path d="M2038 2122 L2028 2136" stroke="#f0d020" stroke-width="2"/>
<circle cx="2089" cy="2130" r="14.5" fill="#2aa3e6"/><path d="M2080 2131 L2099 2122 L2091 2138 L2089 2133 Z" fill="#fff"/><circle cx="2099" cy="2119" r="11" fill="#2a7a8a"/>
<text x="2099" y="2124" font-size="13" font-weight="normal" fill="#fff" text-anchor="middle">19</text>
<circle cx="2143.3" cy="2130" r="15" fill="#e33b2e"/><path d="M2143.3 2130 L2156.3 2137.5 A15 15 0 0 1 2130.3 2137.5 Z" fill="#2c9a4a"/><path d="M2143.3 2130 L2156.3 2122.5 A15 15 0 0 1 2143.3 2145 Z" fill="#f5c21b"/><circle cx="2143.3" cy="2130" r="6.5" fill="#fff"/><circle cx="2143.3" cy="2130" r="5" fill="#3a7ee8"/>
<rect x="2190" y="2124" width="16" height="14" rx="2" fill="#b8b8b8" stroke="#777"/><path d="M2193 2124 v-4 a5 5 0 0 1 10 0 v4" fill="none" stroke="#888" stroke-width="2"/><path d="M2184 2116 l8 7" stroke="#3a9ae0" stroke-width="3"/><path d="M2203 2134 l9 8" stroke="#4ac040" stroke-width="3"/>
<rect x="2239" y="2118" width="30" height="24" rx="2" fill="#2c2c2c"/><rect x="2239" y="2118" width="30" height="4" fill="#4a4a4a"/><path d="M2244 2127 l4 3 l-4 3" stroke="#ddd" stroke-width="1.5" fill="none"/><rect x="2251" y="2134" width="8" height="1.5" fill="#ddd"/>
<rect x="2285" y="2106" width="47" height="48" rx="4" fill="#f3efec"/><rect x="2300" y="2150" width="17" height="3" rx="1.5" fill="#2a7a8a"/>
<g transform="translate(2291,2109) scale(1.45)"><path d="M2.5 4 V23.5 L17.5 13.5 M2.5 4 L7 7.5" fill="none" stroke="#000" stroke-width="1.3" stroke-linejoin="round"/><path d="M4 13.5 L10.5 4 H22 L15.5 13.5 Z" fill="#8b0000"/><ellipse cx="12.7" cy="9" rx="2.3" ry="4.2" fill="#f3efec"/><rect x="12" y="3.5" width="1.2" height="2.5" fill="#f3efec"/><rect x="13" y="12" width="1.2" height="2" fill="#f3efec"/><path d="M22 4 L16 13" stroke="#000" stroke-width="0.9"/></g>
<path d="M2352 2131 Q2350 2115 2366 2116 Q2380 2118 2378 2130 Q2376 2136 2368 2134 Q2362 2134 2362 2142 Q2356 2146 2352 2131 Z" fill="#3aa0e0"/><circle cx="2359" cy="2126" r="2.2" fill="#e84040"/><circle cx="2366" cy="2121" r="2.2" fill="#f0c020"/><path d="M2371 2146 L2374 2126" stroke="#c08040" stroke-width="2.5"/>
<ellipse cx="2418.6" cy="2131" rx="14" ry="8" fill="#f8c040"/><circle cx="2418.6" cy="2131" r="5.5" fill="#d83020"/><circle cx="2405" cy="2120" r="2" fill="#f8a020"/><circle cx="2418" cy="2117" r="2" fill="#f8a020"/><circle cx="2431" cy="2120" r="2" fill="#f8a020"/>
<rect x="2461" y="2117" width="26" height="26" rx="4" fill="#2b7be0"/><path d="M2461 2138 L2472 2126 L2487 2140 V2143 H2461 Z" fill="#6fd0f5"/><circle cx="2481" cy="2123" r="2.5" fill="#fff"/>
<rect x="1810.0" y="2150" width="7" height="3" rx="1.5" fill="#777"/>
<rect x="2139.8" y="2150" width="7" height="3" rx="1.5" fill="#777"/>
<rect x="2195.3" y="2150" width="7" height="3" rx="1.5" fill="#777"/>
<rect x="2250.2" y="2150" width="7" height="3" rx="1.5" fill="#777"/>
<rect x="2360.7" y="2150" width="7" height="3" rx="1.5" fill="#777"/>
<rect x="2415.1" y="2150" width="7" height="3" rx="1.5" fill="#777"/>
<rect x="2470.1" y="2150" width="7" height="3" rx="1.5" fill="#777"/>
<path d="M3544.5 2132.5 L3549.5 2127 L3554.5 2132.5" stroke="#222" stroke-width="1.4" fill="none"/>
<path d="M3582 2135 Q3579 2135 3579 2131.5 Q3579 2128 3583 2128 Q3585 2122 3591 2122.5 Q3597 2123 3598 2129 Q3601 2129.5 3601 2132 Q3601 2135 3598 2135 Z" fill="#e4e4e4" stroke="#444" stroke-width="1.2"/>
<text x="3624" y="2136" font-size="14.5" font-weight="normal" fill="#222" text-anchor="start" textLength="25.6" lengthAdjust="spacingAndGlyphs">РУС</text>
<rect x="3675" y="2121" width="15" height="13" fill="none" stroke="#333" stroke-width="1.2"/><path d="M3679 2138 h8 M3683 2134 v4 M3692 2121 v17" stroke="#333" stroke-width="1.2"/><rect x="3689" y="2119" width="5" height="6" rx="1.5" fill="none" stroke="#333"/>
<path d="M3705 2127 h3 l5 -5 v17 l-5 -5 h-3 z" fill="none" stroke="#333" stroke-width="1.2"/><path d="M3716 2127 l6 6 M3722 2127 l-6 6" stroke="#333" stroke-width="1.2"/>
<text x="3816" y="2125" font-size="14.5" font-weight="normal" fill="#222" text-anchor="end" textLength="35.8" lengthAdjust="spacingAndGlyphs">22:34</text>
<text x="3816" y="2145" font-size="14.5" font-weight="normal" fill="#222" text-anchor="end" textLength="71" lengthAdjust="spacingAndGlyphs">21.10.2025</text>
<g transform="translate(17,63)"><circle cx="15" cy="15" r="9" fill="none" stroke="#000" stroke-width="7"/><rect x="11.5" y="1" width="7" height="7" rx="1" fill="#000" transform="rotate(0 15 15)"/><rect x="11.5" y="1" width="7" height="7" rx="1" fill="#000" transform="rotate(60 15 15)"/><rect x="11.5" y="1" width="7" height="7" rx="1" fill="#000" transform="rotate(120 15 15)"/><rect x="11.5" y="1" width="7" height="7" rx="1" fill="#000" transform="rotate(180 15 15)"/><rect x="11.5" y="1" width="7" height="7" rx="1" fill="#000" transform="rotate(240 15 15)"/><rect x="11.5" y="1" width="7" height="7" rx="1" fill="#000" transform="rotate(300 15 15)"/></g>
<g transform="translate(55.8,63)"><path d="M7 1 H20 L26 7 V28 H7 Z" fill="#000"/><path d="M19 1 V8 H26" fill="#f0f0f0"/><path d="M20 2 L25 7 H20 Z" fill="#000"/><circle cx="8" cy="21" r="7.5" fill="#0000ff" stroke="#f0f0f0" stroke-width="1.5"/><path d="M8 16.5 V25.5 M3.5 21 H12.5" stroke="#fff" stroke-width="2.6"/></g>
<g transform="translate(95,63)"><path d="M1 3 H10 L13 6 H25 V10 H6 L1 26 Z" fill="#000"/><path d="M5 10 H29 L25 27 H1 Z" fill="#0000ff"/><path d="M15 12 L21 18 H17.5 V24 H12.5 V18 H9 Z" fill="#fff"/></g>
<g transform="translate(134,63)"><path d="M1 1 H23 L29 7 V28 H1 Z" fill="#000"/><rect x="7" y="1" width="11" height="8" fill="#f0f0f0"/><rect x="13" y="2" width="3" height="6" fill="#000"/><rect x="4" y="17" width="22" height="9" fill="#fff"/><rect x="4" y="23" width="22" height="3" fill="#0000ff"/></g>
<g transform="translate(172.8,63)"><rect x="7" y="1" width="15" height="9" fill="#0000ff"/><path d="M17 1 L22 5 H17 Z" fill="#f0f0f0"/><rect x="1" y="10" width="28" height="12" rx="2" fill="#000"/><circle cx="5" cy="14" r="1.3" fill="#fff"/><rect x="7" y="17" width="15" height="11" fill="#0000ff" stroke="#f0f0f0" stroke-width="0.8"/><rect x="9" y="21" width="11" height="1.5" fill="#fff"/><rect x="9" y="24.5" width="11" height="1.5" fill="#fff"/></g>
<g transform="translate(212,63)"><circle cx="15" cy="15" r="12" fill="#000"/><rect x="12" y="0.5" width="6" height="5" fill="#000" transform="rotate(0 15 15)"/><rect x="12" y="0.5" width="6" height="5" fill="#000" transform="rotate(45 15 15)"/><rect x="12" y="0.5" width="6" height="5" fill="#000" transform="rotate(90 15 15)"/><rect x="12" y="0.5" width="6" height="5" fill="#000" transform="rotate(135 15 15)"/><rect x="12" y="0.5" width="6" height="5" fill="#000" transform="rotate(180 15 15)"/><rect x="12" y="0.5" width="6" height="5" fill="#000" transform="rotate(225 15 15)"/><rect x="12" y="0.5" width="6" height="5" fill="#000" transform="rotate(270 15 15)"/><rect x="12" y="0.5" width="6" height="5" fill="#000" transform="rotate(315 15 15)"/><text x="15" y="20.5" font-size="15" font-weight="bold" fill="#00ff00" text-anchor="middle" textLength="24" lengthAdjust="spacingAndGlyphs">.ac</text></g>
<g transform="translate(250.5,63)"><path d="M4 3 L27 15 L4 27 Z" fill="#00ff00" stroke="#000" stroke-width="1.5" stroke-linejoin="round"/></g>
<g transform="translate(290,63)"><rect x="3" y="3" width="24" height="24" rx="4" fill="#a0a0a0"/></g>
<g transform="translate(328.8,63)"><rect x="1.5" y="1.5" width="12" height="27" fill="none" stroke="#0000ff" stroke-width="2.5"/><rect x="16.5" y="1.5" width="12" height="27" fill="none" stroke="#0000ff" stroke-width="2.5"/><rect x="1" y="1" width="13" height="4" fill="#0000ff"/><rect x="16" y="1" width="13" height="4" fill="#0000ff"/><rect x="3" y="2" width="2" height="2" fill="#fff"/><rect x="18" y="2" width="2" height="2" fill="#fff"/></g>
<g transform="translate(368,63)"><rect x="1.5" y="1.5" width="27" height="12" fill="none" stroke="#0000ff" stroke-width="2.5"/><rect x="1.5" y="16.5" width="27" height="12" fill="none" stroke="#0000ff" stroke-width="2.5"/><rect x="1" y="1" width="28" height="5" fill="#0000ff"/><rect x="1" y="16" width="28" height="5" fill="#0000ff"/><rect x="3" y="2.5" width="2" height="2" fill="#fff"/><rect x="3" y="17.5" width="2" height="2" fill="#fff"/></g>
<g transform="translate(407,63)"><rect x="1.5" y="1.5" width="19" height="11" fill="#f0f0f0" stroke="#0000ff" stroke-width="2.2"/><rect x="1" y="1" width="20" height="4" fill="#0000ff"/><rect x="5.5" y="8.5" width="19" height="11" fill="#f0f0f0" stroke="#0000ff" stroke-width="2.2"/><rect x="5" y="8" width="20" height="4" fill="#0000ff"/><rect x="9.5" y="15.5" width="19" height="11" fill="#f0f0f0" stroke="#0000ff" stroke-width="2.2"/><rect x="9" y="15" width="20" height="4" fill="#0000ff"/></g>
<g transform="translate(445.2,63)"><circle cx="12" cy="12.5" r="9.8" fill="#fff" stroke="#000" stroke-width="4"/><path d="M19.5 20 L27 27.5" stroke="#000" stroke-width="4.2" stroke-linecap="round"/><path d="M12 6.5 V17.5 M6.5 12 H17.5" stroke="#000" stroke-width="3.5"/></g>
<g transform="translate(484.5,63)"><circle cx="12" cy="12.5" r="9.8" fill="#fff" stroke="#000" stroke-width="4"/><path d="M19.5 20 L27 27.5" stroke="#000" stroke-width="4.2" stroke-linecap="round"/><path d="M6.5 12 H17.5" stroke="#000" stroke-width="3.5"/></g>
<g transform="translate(523.9,63)"><circle cx="12" cy="12.5" r="9.8" fill="#fff" stroke="#000" stroke-width="4"/><path d="M19.5 20 L27 27.5" stroke="#000" stroke-width="4.2" stroke-linecap="round"/><path d="M9 15 L15 9" stroke="#000" stroke-width="2.6"/><path d="M17.5 6.5 L10.5 7.2 L16.8 13.5 Z M6.5 17.5 L7.2 10.5 L13.5 16.8 Z" fill="#000"/></g>
<g transform="translate(562.9,63)"><rect x="1" y="1" width="28" height="28" rx="3" fill="#a0a0a0"/><path d="M8 4 L13 9 H10 V14 H6 V9 H3 Z M22 26 L27 21 H24 V16 H20 V21 H17 Z" fill="#e8e8e8"/></g>
<g transform="translate(602,63)"><rect x="1" y="1" width="28" height="28" rx="4" fill="#000"/><path d="M2 13 Q8 4 15 10 Q22 16 28 7" stroke="#fff" stroke-width="2.5" fill="none"/><path d="M2 23 Q8 14 15 20 Q22 26 28 17" stroke="#00e0ff" stroke-width="2.5" fill="none"/></g>
<g transform="translate(641,63)"><circle cx="3" cy="3" r="3" fill="#0000ff"/><path d="M3 3 H12 V25 H24" stroke="#0000ff" stroke-width="3.2" fill="none"/><circle cx="26" cy="26" r="3" fill="#fff" stroke="#0000ff" stroke-width="1.6"/></g>
<g transform="translate(679.7,63)"><path d="M15 4 V14 M3 14 H27 L15 27 Z" stroke="#000" stroke-width="3" fill="none" stroke-linejoin="round"/><circle cx="15" cy="3" r="2.5" fill="#fff" stroke="#0000ff" stroke-width="1.6"/></g>
<g transform="translate(718.7,63)"><circle cx="15" cy="15" r="10.5" fill="none" stroke="#000" stroke-width="3"/><path d="M11 10 L15 20 L19 10" stroke="#000" stroke-width="2.6" fill="none"/><circle cx="15" cy="3" r="2.5" fill="#fff" stroke="#0000ff" stroke-width="1.6"/><circle cx="15" cy="27" r="2.5" fill="#fff" stroke="#0000ff" stroke-width="1.6"/></g>
<g transform="translate(757.7,63)"><path d="M15 4 L19 8 L11 12 L19 16 L11 20 L19 23 L15 26" stroke="#000" stroke-width="2.8" fill="none" stroke-linejoin="round"/><circle cx="15" cy="3" r="2.5" fill="#fff" stroke="#0000ff" stroke-width="1.6"/><circle cx="15" cy="27" r="2.5" fill="#fff" stroke="#0000ff" stroke-width="1.6"/></g>
<g transform="translate(796.8,63)"><path d="M15 4 V11 M15 19 V26 M3 11.5 H27 M3 18.5 H27" stroke="#000" stroke-width="3.2" fill="none"/><circle cx="15" cy="3" r="2.5" fill="#fff" stroke="#0000ff" stroke-width="1.6"/><circle cx="15" cy="27" r="2.5" fill="#fff" stroke="#0000ff" stroke-width="1.6"/></g>
<g transform="translate(835.8,63)"><path d="M11 3 Q19 3 19 9 Q19 15 12 15 Q19 15 19 21 Q19 27 11 27" stroke="#000" stroke-width="3" fill="none"/><circle cx="11" cy="3" r="2.5" fill="#fff" stroke="#0000ff" stroke-width="1.6"/><circle cx="11" cy="27" r="2.5" fill="#fff" stroke="#0000ff" stroke-width="1.6"/></g>
<g transform="translate(874.7,63)"><path d="M15 4 V9 M4 9 H26 L15 21 Z M4 21.5 H26 M15 22 V26" stroke="#000" stroke-width="3" fill="none" stroke-linejoin="round"/><circle cx="15" cy="3" r="2.5" fill="#fff" stroke="#0000ff" stroke-width="1.6"/><circle cx="15" cy="27" r="2.5" fill="#fff" stroke="#0000ff" stroke-width="1.6"/></g>
<g transform="translate(913.5,63)"><rect x="2" y="1" width="26" height="28" fill="none" stroke="#0000ff" stroke-width="2" stroke-dasharray="4 3"/><rect x="5" y="1" width="20" height="28" rx="2" fill="#000"/><path d="M11 9 L20 15 L11 21 Z" fill="#fff"/><circle cx="3" cy="15" r="2" fill="#0000ff"/><circle cx="27" cy="15" r="2" fill="#0000ff"/></g>
<g transform="translate(952.5,63)"><text x="15" y="17" font-size="17" font-weight="bold" fill="#0000ff" text-anchor="middle" textLength="28" lengthAdjust="spacingAndGlyphs">net</text><path d="M3 25 H27" stroke="#000080" stroke-width="3.5" stroke-linecap="round"/></g>
<g transform="translate(991.7,63)"><text x="15" y="27" font-size="30" font-weight="bold" fill="#0000ff" text-anchor="middle">t</text></g>
<g transform="translate(1029.4,63)"><circle cx="7" cy="25" r="2.5" fill="#000"/><text x="17" y="27" font-size="30" font-weight="bold" fill="#000" text-anchor="middle">t</text></g>
<g transform="translate(1070.2,63)"><circle cx="15" cy="15" r="13.5" fill="#000"/><path d="M9.5 9.5 L20.5 20.5 M20.5 9.5 L9.5 20.5" stroke="#fff" stroke-width="4.2" stroke-linecap="round"/></g>
<g transform="translate(1108.6,63)"><path d="M18 2 H28 V12 Z" fill="#0000ff"/><path d="M2 18 L12 28 H2 Z" transform="translate(0,0)" fill="#0000ff"/><circle cx="13" cy="17" r="2.2" fill="#0000ff"/><circle cx="18" cy="12" r="2.2" fill="#0000ff"/></g>
<g transform="translate(1148.2,63)"><path d="M18 2 H28 V12 Z" fill="#0000ff"/><path d="M2 18 L12 28 H2 Z" fill="none" stroke="#a0a0a0" stroke-width="1.2"/><circle cx="13" cy="17" r="2.2" fill="#a0a0a0"/><circle cx="18" cy="12" r="2.2" fill="#a0a0a0"/></g>
<g transform="translate(1186.6,63)"><path d="M18 2 H28 V12 Z" fill="#0000ff"/><circle cx="3" cy="3" r="2.2" fill="#fff" stroke="#0000ff" stroke-width="1.4"/><path d="M5 3 H26 V24" stroke="#0000ff" stroke-width="1.6" fill="none"/><circle cx="26" cy="26" r="2.2" fill="#fff" stroke="#0000ff" stroke-width="1.4"/><path d="M2 18 L12 28 H2 Z" fill="none" stroke="#a0a0a0" stroke-width="1.2"/><circle cx="13" cy="17" r="2" fill="#a0a0a0"/><circle cx="18" cy="12" r="2" fill="#a0a0a0"/></g>
<g transform="translate(1226.2,63)"><path d="M5 27 L15 17 L25 27 Z" fill="none" stroke="#a0a0a0" stroke-width="3"/><path d="M17 1 L27 11 L17 21 Z" fill="#a0a0a0"/><path d="M13 2 A10 10 0 0 0 3 14" stroke="#a0a0a0" stroke-width="2.5" fill="none" stroke-dasharray="2.5 2"/></g>
<g transform="translate(1264.7,63)"><path d="M1 3 L12 13 L1 26 Z M29 3 L18 13 L29 26 Z" fill="#a0a0a0"/><path d="M15 2 V28" stroke="#a0a0a0" stroke-width="2.5" stroke-dasharray="3 2"/></g>
<g transform="translate(1304.3,63)"><path d="M12 3 L1 12 L12 21 V16 Q24 15 23 28 Q30 10 12 8 Z" fill="#000"/></g>
<g transform="translate(1342.7,63)"><path d="M18 3 L29 12 L18 21 V16 Q6 15 7 28 Q0 10 18 8 Z" fill="#a0a0a0"/></g>
<g transform="translate(1382.3,63)"><circle cx="12" cy="12" r="9.5" fill="#008888" stroke="#000" stroke-width="4.5"/><path d="M19 19 L27 27" stroke="#000" stroke-width="4.5" stroke-linecap="round"/><path d="M6.5 12.5 A6 6 0 0 1 12.5 6.5 L13 8.5 A5 5 0 0 0 8.5 13 Z" fill="#00ffff"/></g>
</svg></body></html>
